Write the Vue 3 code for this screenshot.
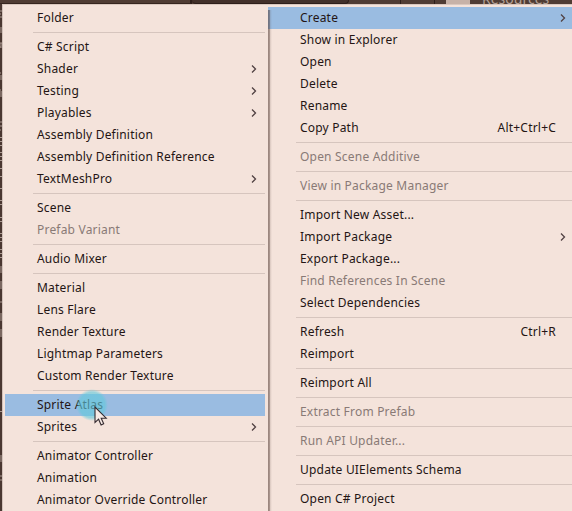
<script setup>
const sep = { sep: true }
const left = [
  { t: 'Folder' }, sep,
  { t: 'C# Script' }, { t: 'Shader', sub: true }, { t: 'Testing', sub: true }, { t: 'Playables', sub: true },
  { t: 'Assembly Definition' }, { t: 'Assembly Definition Reference' }, { t: 'TextMeshPro', sub: true }, sep,
  { t: 'Scene' }, { t: 'Prefab Variant', off: true }, sep,
  { t: 'Audio Mixer' }, sep,
  { t: 'Material' }, { t: 'Lens Flare' }, { t: 'Render Texture' }, { t: 'Lightmap Parameters' }, { t: 'Custom Render Texture' }, sep,
  { t: 'Sprite Atlas', on: true, pointer: true }, { t: 'Sprites', sub: true }, sep,
  { t: 'Animator Controller' }, { t: 'Animation' }, { t: 'Animator Override Controller' },
]
const right = [
  { t: 'Create', on: true, sub: true }, { t: 'Show in Explorer' }, { t: 'Open' }, { t: 'Delete' }, { t: 'Rename' },
  { t: 'Copy Path', key: 'Alt+Ctrl+C' }, sep,
  { t: 'Open Scene Additive', off: true }, sep,
  { t: 'View in Package Manager', off: true }, sep,
  { t: 'Import New Asset...' }, { t: 'Import Package', sub: true }, { t: 'Export Package...' },
  { t: 'Find References In Scene', off: true }, { t: 'Select Dependencies' }, sep,
  { t: 'Refresh', key: 'Ctrl+R' }, { t: 'Reimport' }, sep,
  { t: 'Reimport All' }, sep,
  { t: 'Extract From Prefab', off: true }, sep,
  { t: 'Run API Updater...', off: true }, sep,
  { t: 'Update UIElements Schema' }, sep,
  { t: 'Open C# Project' },
]
const menus = [{ name: 'submenu', items: left }, { name: 'main', items: right }]
</script>

<template>
  <div class="screen">
    <div class="topbar">
      <i class="tab first"></i><i class="tab field"></i><i class="tab"></i><i class="tab small"></i>
      <i class="folder"></i><span class="res">Resources</span>
    </div>
    <div class="body">
      <svg class="edge" width="2" height="507" viewBox="0 4 2 507">
        <path d="M0 11H2M0 14H1M0 17H2M1 27V33M0 43H2M1 43V48M0 47H1M0 73H1M1 75V80M0 90H1M1 91V97M0 122H2M0 126H2M0 130H1" />
        <path d="M0 137.5H2M0 141.5H2M0 145.5H2M0 152.5H2M0 156.5H2M0 160.5H2M0 168.5H2M0 176.5H2M0 188.5H2M0 200.5H2M0 204.5H2M0 217.5H2M0 221.5H2M0 233.5H2M0 237.5H2M0 241.5H2M0 249.5H2M0 253.5H2M0 257.5H2" />
        <path d="M1 266V273M1 281V289M1 301V303M1 313V321M1 329V337M0 411.5H2M1 455V462M0 476H2M0 480H2" />
      </svg>
      <div v-for="m in menus" :key="m.name" class="menu" :class="m.name">
        <template v-for="(it, i) in m.items" :key="i">
          <div v-if="it.sep" class="sep"></div>
          <div v-else class="item" :class="{ on: it.on, off: it.off }">
            <span class="label">{{ it.t }}</span>
            <span v-if="it.key" class="key">{{ it.key }}</span>
            <svg v-if="it.sub" class="chev" width="6" height="10" viewBox="0 0 6 10"><path d="M1 1.5 4.5 5 1 8.5" /></svg>
            <template v-if="it.pointer">
              <i class="halo"></i>
              <svg class="cursor" width="14" height="21" viewBox="0 0 14 21"><path d="M1 1V16.5L4.6 13.2 7.1 19 9.7 17.8 7.2 12.2H12.2Z" /></svg>
            </template>
          </div>
        </template>
      </div>
    </div>
  </div>
</template>

<style>
body { margin: 0; overflow: hidden; background: #4d3a33; }
</style>
<style scoped>
.screen { width: 572px; height: 511px; overflow: hidden; display: flex; flex-direction: column; background: #4a3731; font-family: "Noto Sans", "Noto Sans CJK SC", sans-serif; font-size: 12px; color: #241514; }
.topbar { height: 4px; flex: none; display: flex; background: #503c34; overflow: hidden; }
.tab { flex: none; box-sizing: border-box; width: 55px; border-right: 1px solid #2d1e1a; }
.tab.first { width: 192px; border-right-width: 2px; border-bottom: 1px solid #36251f; }
.tab.field { width: 157px; background: #42302a; border-bottom: 1px solid #2d1e1a; border-radius: 0 0 5px 5px; margin-right: -3px; }
.tab.small { width: 34px; }
.folder { width: 24px; flex: none; background: #c7b2a8; margin-left: 11px; }
.res { margin-left: 12px; color: #b3a096; font-size: 14px; line-height: 14px; margin-top: -8px; height: 14px; }
.body { flex: 1; min-height: 0; display: flex; }
.edge { flex: none; fill: none; stroke: #aa9991; stroke-width: 1; }
.menu { position: relative; box-sizing: border-box; background: #f4e3db; padding-top: 2px; border-top: 1px solid #dac8bf; overflow: hidden; }
.submenu { width: 266px; flex: none; border-left: 1px solid #d3c2ba; padding-left: 2px; padding-right: 3px; }
.main { flex: 1; min-width: 0; }
.main::after { content: ""; position: absolute; left: 0; top: 5px; bottom: 0; width: 4px; background: linear-gradient(90deg, rgba(74, 50, 43, .52) 0 1px, rgba(74, 50, 43, .45) 1px 2px, rgba(74, 50, 43, .12) 2px 3px, rgba(74, 50, 43, .04) 3px); }
.item { position: relative; height: 22px; display: flex; align-items: center; padding-left: 32px; padding-right: 8px; white-space: nowrap; }
.main .item { padding-right: 6px; }
.label, .key { line-height: 22px; letter-spacing: .2px; }
.key { margin-left: auto; margin-right: 10px; }
.chev { margin-left: auto; fill: none; stroke: #514244; stroke-width: 1.3; }
.on { background: #9abce1; }
.off { color: #897a76; }
.sep { height: 1px; margin: 3px 0; margin-left: 28px; background: #d6c5be; }
.halo { position: absolute; left: 71px; top: -5px; width: 32px; height: 32px; border-radius: 50%; background: radial-gradient(circle closest-side, rgba(97, 201, 220, .62) 0 80%, rgba(97, 201, 220, 0)); }
.cursor { position: absolute; left: 89px; top: 12px; z-index: 2; fill: #f7eae5; stroke: #352b30; stroke-width: 1.1; }
</style>
